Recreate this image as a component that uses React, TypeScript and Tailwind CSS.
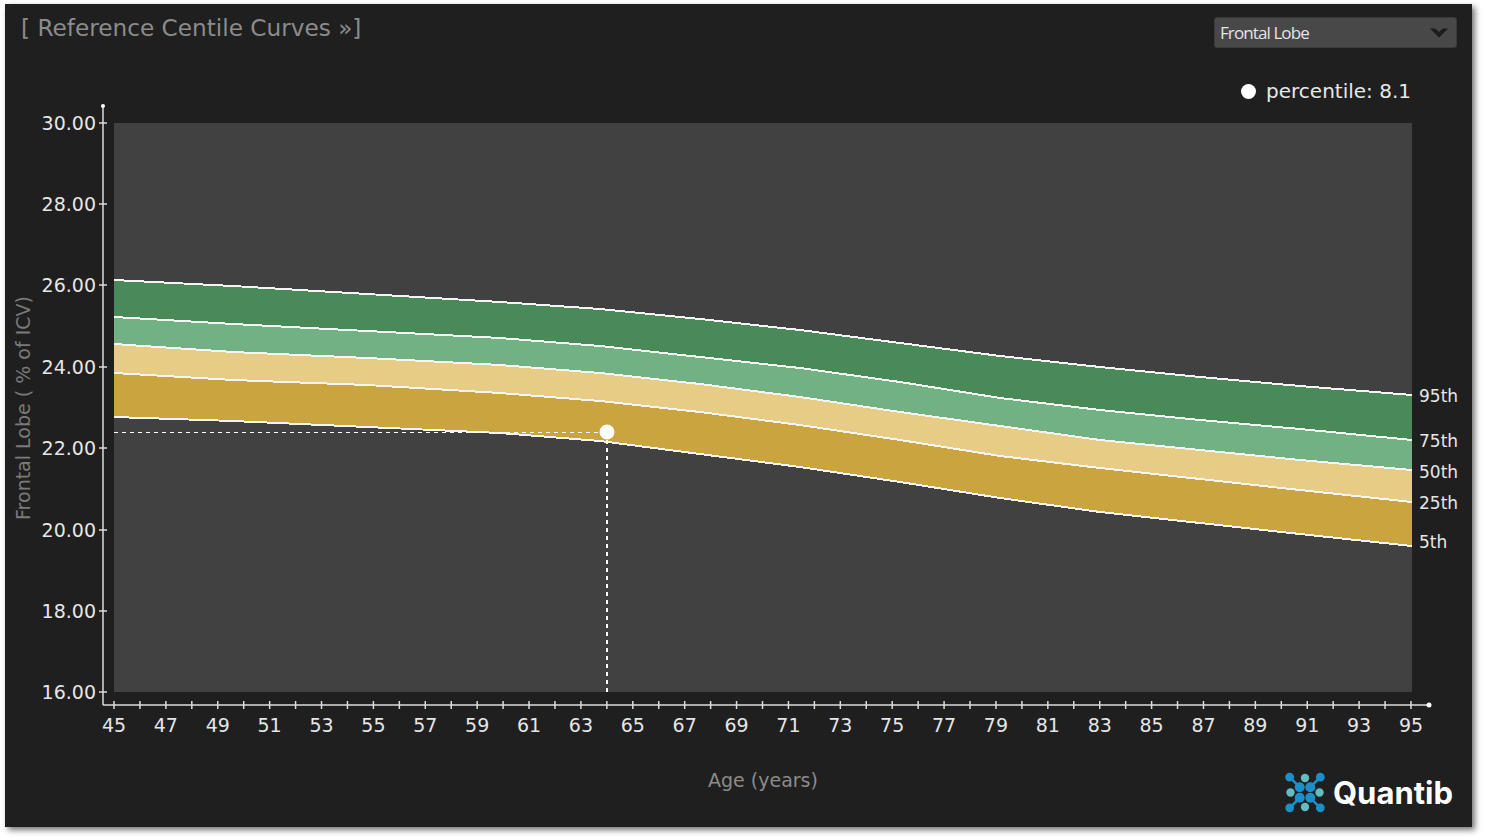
import React from "react";

const xs = [114, 233, 367, 500, 600, 700, 800, 900, 1000, 1100, 1200, 1300, 1412];
const c95 = [280, 286, 294, 302, 309, 319, 330, 343, 356, 367, 377, 386, 395];
const c75 = [317, 324, 331, 338, 346, 357, 368, 382, 398, 410, 420, 429, 440];
const c50 = [344, 352, 358, 365, 373, 384, 397, 412, 426, 440, 450, 460, 470];
const c25 = [373, 380, 385, 393, 401, 412, 425, 440, 456, 468, 479, 490, 502];
const c5 = [417, 421, 427, 433, 441, 454, 467, 482, 498, 512, 523, 534, 546];

const line = (ys: number[]) => ys.map((y, i) => `${xs[i]},${y}`).join(" ");
const band = (a: number[], b: number[]) =>
  line(a) + " " + b.map((y, i) => `${xs[i]},${y}`).reverse().join(" ");

const yTicks = [
  ["30.00", 123],
  ["28.00", 204],
  ["26.00", 285],
  ["24.00", 367],
  ["22.00", 448],
  ["20.00", 530],
  ["18.00", 611],
  ["16.00", 692],
] as const;

const ages = Array.from({ length: 51 }, (_, i) => 45 + i);
const ageX = (a: number) => 114 + (a - 45) * 25.94;
const FONT = "'DejaVu Sans', sans-serif";

function Logo() {
  const corners = [
    [-15.3, -15.3, -5.3, -5.3],
    [15.3, -15.3, 5.3, -5.3],
    [-15.3, 15.3, -5.3, 5.3],
    [15.3, 15.3, 5.3, 5.3],
  ];
  const teal = [
    [0, -14.5],
    [0, 14.5],
    [-14.5, 0],
    [14.5, 0],
  ];
  return (
    <svg width="40" height="41" viewBox="-20 -20.5 40 41">
      {corners.map(([a, b, c, d], i) => (
        <g key={i} fill="#1b8fc8">
          <line x1={a} y1={b} x2={c} y2={d} stroke="#1b8fc8" strokeWidth="2.6" />
          <circle cx={a} cy={b} r="4.4" />
          <circle cx={c} cy={d} r="5" />
        </g>
      ))}
      {teal.map(([a, b], i) => (
        <circle key={i} cx={a} cy={b} r="4.2" fill="#62bcc0" />
      ))}
    </svg>
  );
}

export default function App() {
  return (
    <div className="w-[1485px] h-[840px] bg-white pl-[5px] pt-[4px] overflow-hidden">
      <div className="w-[1467px] h-[823px] bg-[#1f1f1f] flex flex-col shadow-[3px_3px_6px_rgba(0,0,0,0.55)]">
        <div className="flex justify-between items-start h-[66px] pl-[16px] pr-[15px] pt-[8px]">
          <div className="text-[23.2px] leading-[32px] text-[#8b8b8b] font-['DejaVu_Sans',sans-serif]">
            [ Reference Centile Curves »]
          </div>
          <div className="w-[243px] h-[31px] mt-[5px] bg-[#484848] rounded-[3px] border border-[#3a3a3a] flex items-center justify-between pl-[5px] pr-[8px]">
            <span className="text-[17px] tracking-[-0.9px] text-[#e4e4e4] font-['Open_Sans',sans-serif]">
              Frontal Lobe
            </span>
            <svg width="18" height="10" viewBox="0 0 18 10">
              <path d="M0 0.5 H5 L9 4 L13 0.5 H18 L9 9.5 Z" fill="#1c1c1c" />
            </svg>
          </div>
        </div>

        <div className="flex items-center justify-end h-[30px] pt-[12px] pr-[61px] gap-[10px]">
          <span className="w-[15px] h-[15px] rounded-full bg-white" />
          <span className="text-[20px] leading-none text-[#e8e8e8] font-['DejaVu_Sans',sans-serif]">
            percentile: 8.1
          </span>
        </div>

        <svg width="1467" height="668" viewBox="5 100 1467 668" className="block">
          <rect x="114" y="123" width="1298" height="569" fill="#414141" />
          <polygon points={band(c95, c75)} fill="#4a8a58" />
          <polygon points={band(c75, c50)} fill="#72b183" />
          <polygon points={band(c50, c25)} fill="#e6cc84" />
          <polygon points={band(c25, c5)} fill="#c9a43f" />
          {[c95, c75, c50, c25, c5].map((c, i) => (
            <polyline
              key={i}
              points={line(c)}
              fill="none"
              stroke="#f4f4f4"
              strokeWidth="2"
              shapeRendering="crispEdges"
            />
          ))}

          <g stroke="#fff" strokeWidth="1.5" strokeDasharray="4 4" shapeRendering="crispEdges">
            <line x1="114" y1="432.5" x2="600" y2="432.5" />
            <line x1="607" y1="440" x2="607" y2="692" />
          </g>
          <circle cx="607" cy="432" r="7.5" fill="#fff" />

          <g stroke="#dcdcdc" strokeWidth="1.5">
            <line x1="103" y1="106" x2="103" y2="705" />
            <line x1="103" y1="705" x2="1429" y2="705" />
            {yTicks.map(([, y]) => (
              <line key={y} x1="99" y1={y} x2="107" y2={y} />
            ))}
            {ages.map((a) => (
              <line key={a} x1={ageX(a)} y1="701" x2={ageX(a)} y2="709" />
            ))}
          </g>
          <circle cx="103" cy="106" r="2" fill="#fff" />
          <circle cx="1429" cy="705" r="2.5" fill="#fff" />

          <g fontFamily={FONT} fontSize="19" fill="#e6e6e6">
            {yTicks.map(([t, y]) => (
              <text key={t} x="96" y={y + 7} textAnchor="end">
                {t}
              </text>
            ))}
            {ages
              .filter((a) => a % 2 === 1)
              .map((a) => (
                <text key={a} x={ageX(a)} y="732" textAnchor="middle">
                  {a}
                </text>
              ))}
          </g>

          <g fontFamily={FONT} fontSize="17" fill="#e6e6e6">
            <text x="1419" y="402">95th</text>
            <text x="1419" y="447">75th</text>
            <text x="1419" y="478">50th</text>
            <text x="1419" y="509">25th</text>
            <text x="1419" y="548">5th</text>
          </g>

          <text
            fontFamily={FONT}
            fontSize="19"
            fill="#7a7a7a"
            textAnchor="middle"
            transform="translate(30 408) rotate(-90)"
          >
            Frontal Lobe ( % of ICV)
          </text>
        </svg>

        <div className="flex justify-between items-start pl-[703px] pr-[19px]">
          <span className="text-[19px] leading-[24px] text-[#8b8b8b] font-['DejaVu_Sans',sans-serif]">
            Age (years)
          </span>
          <div className="flex items-center gap-[8px] mt-[4px]">
            <Logo />
            <span className="text-[31px] leading-none font-bold text-white font-['Inter',sans-serif]">
              Quantib
            </span>
          </div>
        </div>
      </div>
    </div>
  );
}
